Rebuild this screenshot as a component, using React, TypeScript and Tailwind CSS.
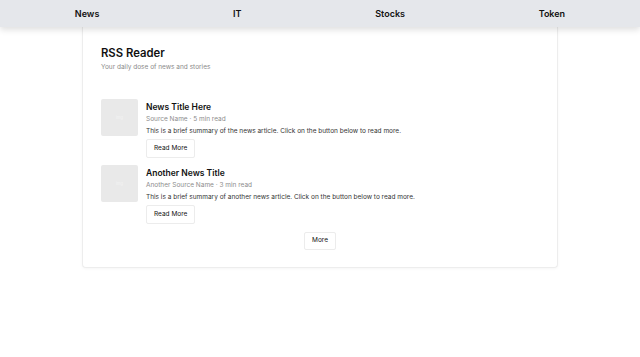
import React from 'react'

const articles = [
  { id: '1', title: 'News Title Here', source: 'Source Name', time: '5 min read', summary: 'This is a brief summary of the news article. Click on the button below to read more.' },
  { id: '2', title: 'Another News Title', source: 'Another Source Name', time: '3 min read', summary: 'This is a brief summary of another news article. Click on the button below to read more.' },
]

const tabs = ['News', 'IT', 'Stocks', 'Token']

function App() {
  return (
    <div className="min-h-[357px] bg-white font-['Inter',sans-serif] text-[#111]">
      <nav className="relative z-10 flex h-[27px] items-center justify-around bg-[#e5e7eb] px-2 shadow-[0_3px_6px_rgba(0,0,0,0.12)]">
        {tabs.map((tab) => (
          <span key={tab} className="text-[9px] font-semibold leading-none text-[#111]">
            {tab}
          </span>
        ))}
      </nav>
      <main>
        <div className="mx-auto w-[476px] rounded-b-[4px] border border-t-0 border-[#ededed] bg-white px-[18px] pb-[17px] pt-[19px] shadow-[0_1px_3px_rgba(0,0,0,0.04)]">
          <h1 className="text-[11.3px] font-semibold leading-[15px]">RSS Reader</h1>
          <p className="mt-[1px] text-[6.5px] leading-[10px] text-[#8a8a8a]">Your daily dose of news and stories</p>
          <div className="mt-[27px] flex flex-col gap-[7px]">
            {articles.map((article) => (
              <div key={article.id} className="flex gap-[8px]">
                <div className="flex h-[37px] w-[37px] shrink-0 items-center justify-center rounded-[2px] bg-[#e9e9e9]">
                  <span className="text-[4px] text-[#f4f4f4]">img</span>
                </div>
                <div className="flex flex-col items-start">
                  <h2 className="pt-[1px] text-[8.5px] font-semibold leading-[14px]">{article.title}</h2>
                  <p className="text-[6.5px] leading-[10px] text-[#8c8c8c]">
                    {article.source} · {article.time}
                  </p>
                  <p className="mt-[2px] text-[6.5px] leading-[10px] text-[#333]">{article.summary}</p>
                  <button className="mt-[3px] h-[19px] rounded-[2px] border border-[#ececec] bg-white px-[7px] text-[6.5px] font-normal text-[#111]">
                    Read More
                  </button>
                </div>
              </div>
            ))}
          </div>
          <div className="mt-[8px] flex justify-center">
            <button className="h-[18px] w-[32px] rounded-[2px] border border-[#ececec] bg-white text-[6.5px] font-normal text-[#111]">
              More
            </button>
          </div>
        </div>
      </main>
    </div>
  )
}

export default App
